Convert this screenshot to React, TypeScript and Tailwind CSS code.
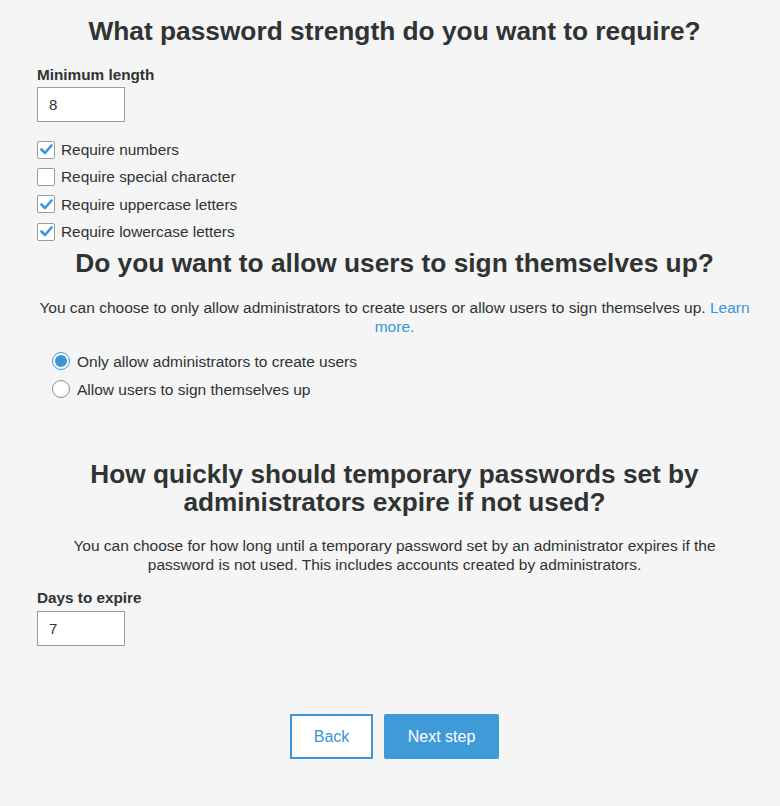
import React, { useState } from 'react';

const font = { fontFamily: '"Liberation Sans", Arial, Helvetica, sans-serif' };

function Check({ checked, label, onToggle }: { checked: boolean; label: string; onToggle: () => void }) {
  return (
    <label className="flex items-center h-[27.3px] cursor-pointer" onClick={onToggle}>
      <span className="w-[18px] h-[18px] border border-[#9a9c9c] bg-white flex items-center justify-center rounded-[2px]">
        {checked && (
          <svg width="13" height="11" viewBox="0 0 13 11">
            <path d="M1.5 5.5 L5 9 L11.5 1.5" fill="none" stroke="#3b95d9" strokeWidth="2.6" strokeLinecap="round" strokeLinejoin="round" />
          </svg>
        )}
      </span>
      <span className="ml-[6px] text-[15.4px] text-[#2f3333]">{label}</span>
    </label>
  );
}

function Radio({ checked, label, onSelect }: { checked: boolean; label: string; onSelect: () => void }) {
  return (
    <label className="flex items-center h-[28px] cursor-pointer" onClick={onSelect}>
      <span className={`w-[18px] h-[18px] rounded-full border bg-white flex items-center justify-center ${checked ? 'border-[#3b95d9]' : 'border-[#8f9292]'}`}>
        {checked && <span className="w-[12px] h-[12px] rounded-full bg-[#3b95d9]" />}
      </span>
      <span className="ml-[7px] text-[15.5px] text-[#2f3333]">{label}</span>
    </label>
  );
}

export default function App() {
  const [minLength, setMinLength] = useState('8');
  const [days, setDays] = useState('7');
  const [checks, setChecks] = useState({ numbers: true, special: false, upper: true, lower: true });
  const [signup, setSignup] = useState<'admin' | 'self'>('admin');

  const toggle = (k: keyof typeof checks) => setChecks({ ...checks, [k]: !checks[k] });

  return (
    <div className="min-h-[806px] bg-[#f4f5f4] text-[#2f3333] pl-[37px] pr-[28px] pt-[15px]" style={font}>
      {/* Password strength */}
      <h2 className="text-center text-[26.3px] leading-[32px] font-bold">What password strength do you want to require?</h2>
      <div className="mt-[20px] text-[15.3px] leading-[16px] font-bold">Minimum length</div>
      <input
        className="mt-[4px] block w-[88px] h-[35px] border border-[#9a9c9c] bg-white px-[11px] text-[15px] outline-none"
        value={minLength}
        onChange={e => setMinLength(e.target.value)}
      />
      <div className="mt-[14px]">
        <Check checked={checks.numbers} label="Require numbers" onToggle={() => toggle('numbers')} />
        <Check checked={checks.special} label="Require special character" onToggle={() => toggle('special')} />
        <Check checked={checks.upper} label="Require uppercase letters" onToggle={() => toggle('upper')} />
        <Check checked={checks.lower} label="Require lowercase letters" onToggle={() => toggle('lower')} />
      </div>

      {/* Sign up */}
      <h2 className="mt-[2px] text-center text-[26.3px] leading-[32px] font-bold">Do you want to allow users to sign themselves up?</h2>
      <p className="mt-[19px] text-center text-[15.5px] leading-[19px]">
        You can choose to only allow administrators to create users or allow users to sign themselves up.{' '}
        <a href="#" className="text-[#3b95d9]">Learn more.</a>
      </p>
      <div className="mt-[11px] pl-[15px]">
        <Radio checked={signup === 'admin'} label="Only allow administrators to create users" onSelect={() => setSignup('admin')} />
        <Radio checked={signup === 'self'} label="Allow users to sign themselves up" onSelect={() => setSignup('self')} />
      </div>

      {/* Temporary password expiry */}
      <h2 className="mt-[57px] text-center text-[26.2px] leading-[28px] font-bold">
        How quickly should temporary passwords set by
        <br />
        administrators expire if not used?
      </h2>
      <p className="mt-[20px] text-center text-[15.5px] leading-[19px]">
        You can choose for how long until a temporary password set by an administrator expires if the
        <br />
        password is not used. This includes accounts created by administrators.
      </p>
      <div className="mt-[16px] text-[15.3px] leading-[16px] font-bold">Days to expire</div>
      <input
        className="mt-[5px] block w-[88px] h-[35px] border border-[#9a9c9c] bg-white px-[11px] text-[15px] outline-none"
        value={days}
        onChange={e => setDays(e.target.value)}
      />

      <div className="mt-[68px] flex justify-center gap-[11px]">
        <button className="w-[83px] h-[45px] border-2 border-[#3b95d9] bg-white text-[#3b95d9] text-[16px]">Back</button>
        <button className="w-[115px] h-[45px] bg-[#3f9ad8] text-white text-[16px] rounded-[2px]">Next step</button>
      </div>
    </div>
  );
}
